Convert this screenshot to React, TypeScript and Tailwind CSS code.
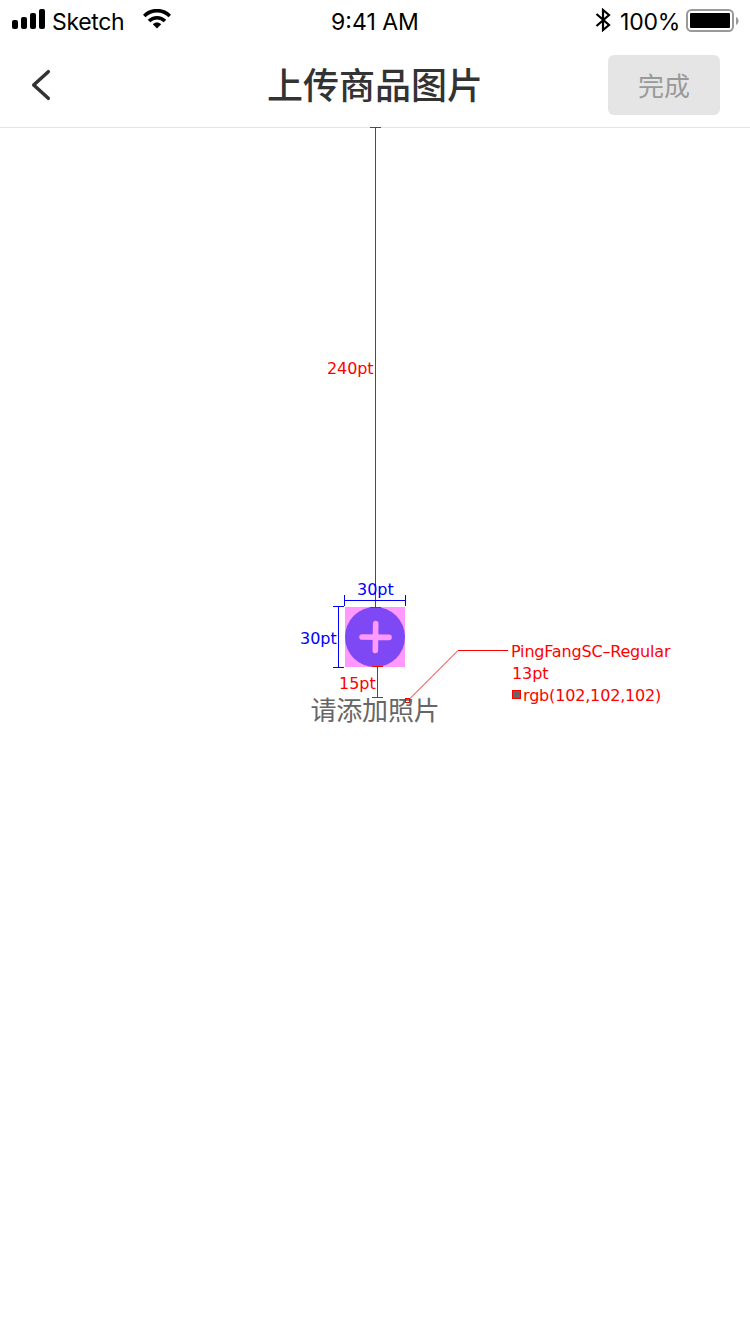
import type { ReactNode } from 'react';

function StatusBar() {
  return (
    <div className="grid h-10 grid-cols-3 items-start font-['Inter','Liberation_Sans',sans-serif] text-black">
      <div className="flex pl-3">
        <svg className="mt-[9px] h-5 w-[33px]" viewBox="0 0 33 20">
          <rect x="0" y="11" width="6" height="9" rx="2" />
          <rect x="9" y="8" width="6" height="12" rx="2" />
          <rect x="18" y="4" width="6" height="16" rx="2" />
          <rect x="27" y="0" width="6" height="20" rx="2" />
        </svg>
        <span className="ml-[7px] mt-[7px] w-[73px] whitespace-nowrap text-[23px] leading-[30px] tracking-[-0.35px]">Sketch</span>
        <svg className="ml-[18px] mt-[9px] h-5 w-[28px]" viewBox="0 0 28 20">
          <g fill="none" stroke="#000" strokeWidth="3.6">
            <path d="M1.2 7C8.4-.2 19.6-.2 26.8 7" />
            <path d="M6 12C10.5 7.6 17.5 7.6 22 12" />
          </g>
          <path d="M9.8 15.2C12.2 12.9 15.8 12.9 18.2 15.2L14 19.4Z" />
        </svg>
      </div>
      <div className="mt-[7px] whitespace-nowrap text-center text-[23px] leading-[30px]">9:41 AM</div>
      <div className="flex justify-end pr-[11px]">
        <svg className="mt-2 h-6 w-[16px]" viewBox="0 0 16 24">
          <path d="M1.5 6L14 17L8 22V2L14 7L1.5 18" fill="none" stroke="#000" strokeWidth="2.2" />
        </svg>
        <span className="ml-[9px] mt-[7px] w-[60px] whitespace-nowrap text-[23px] leading-[30px] tracking-[-0.2px]">100%</span>
        <svg className="ml-[6px] mt-[9px] h-[23px] w-[53px]" viewBox="0 0 53 23">
          <rect x="1" y="1" width="46" height="21" rx="4.5" fill="none" stroke="#999" strokeWidth="2" />
          <rect x="4" y="4" width="40" height="15" rx="1" />
          <path d="M50 8C53.4 9.5 53.4 14.5 50 16Z" fill="#999" />
        </svg>
      </div>
    </div>
  );
}

function NavBar() {
  return (
    <header className="grid h-[88px] grid-cols-[1fr_auto_1fr] items-start border-b border-[#e5e5e5]">
      <button className="ml-[31px] mt-[29px] h-8 w-5" aria-label="返回">
        <svg className="h-8 w-5" viewBox="0 0 20 32">
          <path d="M17.3 2.7L2.7 16L17.3 29.3" fill="none" stroke="#333" strokeWidth="3.5" strokeLinecap="round" strokeLinejoin="round" />
        </svg>
      </button>
      <h1 className="mt-[18px] text-[36px] font-medium leading-[50px] text-[#333]">上传商品图片</h1>
      <button className="mr-[30px] mt-[15px] h-[60px] w-28 justify-self-end rounded-md bg-[#e5e5e5] text-[26px] leading-[60px] text-[#999]">完成</button>
    </header>
  );
}

function Label({ className, children }: { className: string; children: ReactNode }) {
  return (
    <span className={`absolute whitespace-nowrap font-['DejaVu_Sans',sans-serif] text-[16px] leading-[18px] ${className}`}>
      {children}
    </span>
  );
}

function Annotations() {
  return (
    <div className="pointer-events-none absolute inset-0">
      <svg className="absolute inset-0 h-full w-full" viewBox="0 0 750 1334" fill="none">
        <g stroke="#f00" shapeRendering="crispEdges">
          <path d="M370 127.5H381M375.5 127V608M370 607.5H381" />
          <path d="M372 666.5H383M377.5 666V698M372 697.5H383" />
          <path d="M458 650.5H508M405.5 698.5H409.5V702.5H405.5Z" />
        </g>
        <path d="M409.5 699L458 650.5" stroke="#f00" strokeWidth="0.9" />
        <g stroke="#00f" shapeRendering="crispEdges">
          <path d="M344.5 595V606M344 600.5H406M405.5 595V606" />
          <path d="M333 606.5H344M338.5 606V668M333 667.5H344" />
        </g>
        <rect x="512.5" y="690.5" width="8" height="8" fill="#666" stroke="#f00" shapeRendering="crispEdges" />
      </svg>
      <Label className="left-[327px] top-[360px] tracking-[-0.1px] text-[#f00]">240pt</Label>
      <Label className="left-[357px] top-[581px] text-[#00f]">30pt</Label>
      <Label className="left-[300px] top-[630px] text-[#00f]">30pt</Label>
      <Label className="left-[339px] top-[675px] text-[#f00]">15pt</Label>
      <Label className="left-[511px] top-[643px] tracking-[-0.18px] text-[#f00]">PingFangSC–Regular</Label>
      <Label className="left-[512px] top-[665px] tracking-[-0.1px] text-[#f00]">13pt</Label>
      <Label className="left-[523px] top-[687px] tracking-[-0.17px] text-[#f00]">rgb(102,102,102)</Label>
    </div>
  );
}

export default function App() {
  return (
    <div className="relative h-[1334px] w-[750px] overflow-hidden bg-white font-['Noto_Sans_CJK_SC',sans-serif]">
      <StatusBar />
      <NavBar />
      <main className="flex flex-col items-center pt-[479px]">
        <div className="bg-[#ff99ff]">
          <svg className="block h-[60px] w-[60px]" viewBox="0 0 60 60">
            <circle cx="30" cy="30" r="30" fill="#7f48f5" />
            <path d="M30.7 16.5L30.3 43.5M17 30L44 30.4" stroke="#ff99ff" strokeWidth="5.6" strokeLinecap="round" />
          </svg>
        </div>
        <p className="mt-[27px] text-[26px] leading-[29px] tracking-[-0.2px] text-[#666]">请添加照片</p>
      </main>
      <Annotations />
    </div>
  );
}
